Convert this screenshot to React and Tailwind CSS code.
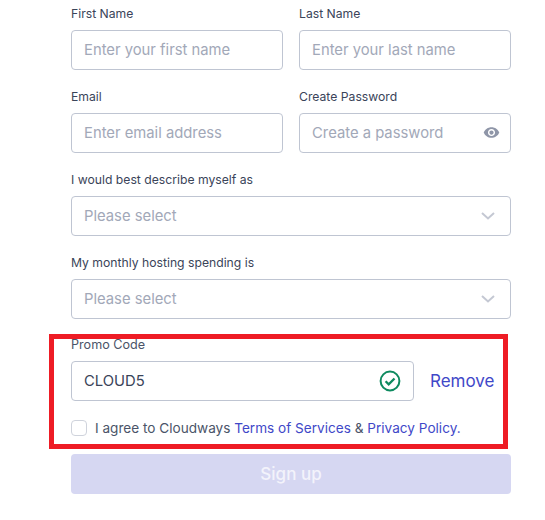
const font = { fontFamily: '"Inter", "Open Sans", sans-serif' };

function Label({ children }) {
  return <label className="block h-5 mb-1.5 text-[12.2px] leading-5 text-[#3a4459]">{children}</label>;
}

function Field({ label, placeholder, type = "text", icon }) {
  return (
    <div>
      <Label>{label}</Label>
      <div className="relative">
        <input
          type={type}
          placeholder={placeholder}
          className="block w-full h-10 px-3 rounded border border-[#bfc5d2] bg-white text-[14.8px] outline-none placeholder:text-[#a2a8b8]"
        />
        {icon}
      </div>
    </div>
  );
}

function Select({ label }) {
  return (
    <div>
      <Label>{label}</Label>
      <div className="flex items-center justify-between h-10 pl-3 pr-[15px] rounded border border-[#bfc5d2] bg-white">
        <span className="pt-px text-[14.8px] text-[#a2a8b8]">Please select</span>
        <svg width="14" height="8" viewBox="0 0 14 8" fill="none" stroke="#c4c8d3" strokeWidth="2">
          <path d="M1 1l6 5.5L13 1" />
        </svg>
      </div>
    </div>
  );
}

const Eye = (
  <svg className="absolute right-[11px] top-[11px]" width="17" height="17" viewBox="0 0 24 24" fill="#8f96a8">
    <path d="M12 4.5C7 4.5 2.73 7.61 1 12c1.73 4.39 6 7.5 11 7.5s9.27-3.11 11-7.5c-1.73-4.39-6-7.5-11-7.5zM12 17c-2.76 0-5-2.24-5-5s2.24-5 5-5 5 2.24 5 5-2.24 5-5 5zm0-8c-1.66 0-3 1.34-3 3s1.34 3 3 3 3-1.34 3-3-1.34-3-3-3z" />
  </svg>
);

export default function App() {
  return (
    <div className="w-[545px] h-[520px] bg-white overflow-hidden pt-1 pl-[71px]" style={font}>
      <form className="w-[440px]">
        <div className="grid grid-cols-2 gap-x-4 gap-y-[17px]">
          <Field label="First Name" placeholder="Enter your first name" />
          <Field label="Last Name" placeholder="Enter your last name" />
          <Field label="Email" placeholder="Enter email address" />
          <Field label="Create Password" placeholder="Create a password" type="password" icon={Eye} />
          <div className="col-span-2">
            <Select label="I would best describe myself as" />
          </div>
          <div className="col-span-2">
            <Select label="My monthly hosting spending is" />
          </div>
        </div>

        <section className="mt-[15px] -ml-[22px] w-[459px] border-[5px] border-[#ee1c25] pl-[17px] pr-2 pb-2">
          <div className="h-2.5 mb-3 text-[12.6px] leading-[11px] text-[#4a5468]">Promo Code</div>
          <div className="flex items-center">
            <div className="flex items-center justify-between w-[343px] h-10 pl-3 pr-3 rounded border border-[#bfc5d2]">
              <span className="text-[14.8px] text-[#3a4459]">CLOUD5</span>
              <svg width="22" height="22" viewBox="0 0 22 22" fill="none" stroke="#0e8a5f" strokeWidth="2">
                <circle cx="11" cy="11" r="9.4" />
                <path d="M6.6 11.2l3.1 3.1 5.8-5.8" strokeWidth="2.3" />
              </svg>
            </div>
            <a className="ml-4 pt-0.5 text-[17px] text-[#3f48c8]">Remove</a>
          </div>
          <div className="flex items-center mt-[19px] h-4">
            <span className="w-4 h-4 rounded border border-[#cfd3dc] bg-white" />
            <p className="ml-2 text-[13.6px] text-[#4a5468] whitespace-nowrap">
              I agree to Cloudways <a className="text-[#3f48c8]">Terms of Services</a> &amp;{" "}
              <a className="text-[#3f48c8]">Privacy Policy.</a>
            </p>
          </div>
        </section>

        <button type="button" className="block w-full h-10 mt-[5px] pt-0.5 rounded bg-[#d6d7f2] text-[17px] font-medium text-[#f3f3fb]">
          Sign up
        </button>
      </form>
    </div>
  );
}
